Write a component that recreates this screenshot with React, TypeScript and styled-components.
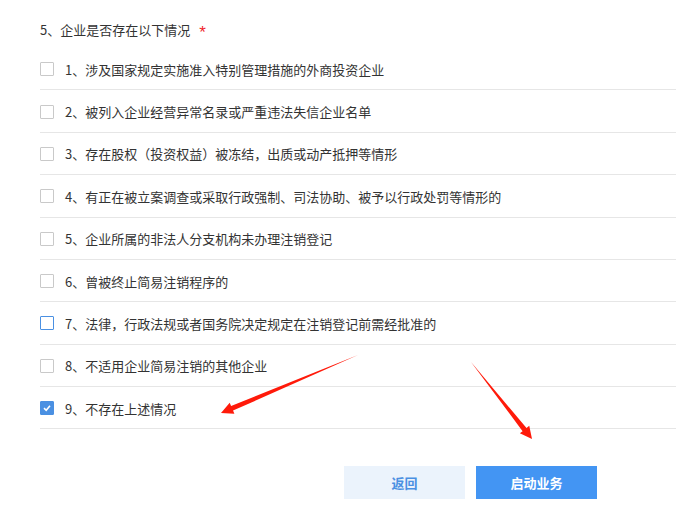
import React from "react";
import styled, { createGlobalStyle } from "styled-components";

const Global = createGlobalStyle`
  html, body { margin: 0; padding: 0; background: #fff; }
  body { font-family: "Microsoft YaHei", "Noto Sans CJK SC", "Liberation Sans", sans-serif; }
`;

const Page = styled.div`
  position: relative;
  width: 686px;
  height: 516px;
  padding: 20px 10px 0 40px;
  box-sizing: border-box;
  overflow: hidden;
`;

const Title = styled.div`
  height: 20px;
  font-size: 13px;
  line-height: 20px;
  color: #333;
  display: flex;
  align-items: center;
`;

const Star = styled.span`
  color: #f0262d;
  margin-left: 9px;
  font-size: 17px;
  line-height: 12px;
  padding-top: 6px;
  font-family: "Liberation Sans", sans-serif;
`;

const List = styled.div`
  margin-top: 8px;
  display: flex;
  flex-direction: column;
`;

const Row = styled.label`
  height: 42.375px;
  box-sizing: border-box;
  border-bottom: 1px solid #e6e6e6;
  display: flex;
  align-items: center;
  gap: 11px;
  font-size: 13px;
  color: #333;
  padding-top: 1px;
`;

const Box = styled.span<{ $checked?: boolean; $focus?: boolean }>`
  width: 14px;
  height: 14px;
  box-sizing: border-box;
  border: 1px solid ${(p) => (p.$checked || p.$focus ? "#4a90e2" : "#c9c9c9")};
  background: ${(p) => (p.$checked ? "#4a90e2" : "#fff")};
  border-radius: 1px;
  display: flex;
  align-items: center;
  justify-content: center;
  flex-shrink: 0;
`;

const ButtonBar = styled.div`
  display: flex;
  gap: 11px;
  padding-left: 304px;
  margin-top: 37px;
`;

const Button = styled.button<{ $primary?: boolean }>`
  width: 121px;
  height: 33px;
  border: none;
  padding: 0;
  font-family: inherit;
  font-size: 13px;
  font-weight: bold;
  background: ${(p) => (p.$primary ? "#4395f3" : "#ebf3fc")};
  color: ${(p) => (p.$primary ? "#fff" : "#4a90e2")};
  cursor: pointer;
`;

const Overlay = styled.svg`
  position: absolute;
  left: 0;
  top: 0;
  pointer-events: none;
`;

const items = [
  "1、涉及国家规定实施准入特别管理措施的外商投资企业",
  "2、被列入企业经营异常名录或严重违法失信企业名单",
  "3、存在股权（投资权益）被冻结，出质或动产抵押等情形",
  "4、有正在被立案调查或采取行政强制、司法协助、被予以行政处罚等情形的",
  "5、企业所属的非法人分支机构未办理注销登记",
  "6、曾被终止简易注销程序的",
  "7、法律，行政法规或者国务院决定规定在注销登记前需经批准的",
  "8、不适用企业简易注销的其他企业",
  "9、不存在上述情况",
];

export default function App() {
  return (
    <Page>
      <Global />
      <Title>
        5、企业是否存在以下情况<Star>*</Star>
      </Title>
      <List>
        {items.map((t, i) => (
          <Row key={i}>
            <Box $checked={i === 8} $focus={i === 6}>
              {i === 8 && (
                <svg width="10" height="10" viewBox="0 0 10 10">
                  <path d="M2 5.2 L4.2 7.3 L8 2.8" stroke="#fff" strokeWidth="1.6" fill="none" />
                </svg>
              )}
            </Box>
            {t}
          </Row>
        ))}
      </List>
      <ButtonBar>
        <Button>返回</Button>
        <Button $primary>启动业务</Button>
      </ButtonBar>
      <Overlay width="686" height="516" viewBox="0 0 686 516">
        <polygon
          fill="#ff1a0a"
          points="358,355 231.08,406.02 229.71,402.80 221,413 234.39,413.84 233.02,410.62"
        />
        <polygon
          fill="#ff1a0a"
          points="471,362 526.51,428.04 529.25,425.86 532,439 519.85,433.32 522.59,431.14"
        />
      </Overlay>
    </Page>
  );
}
